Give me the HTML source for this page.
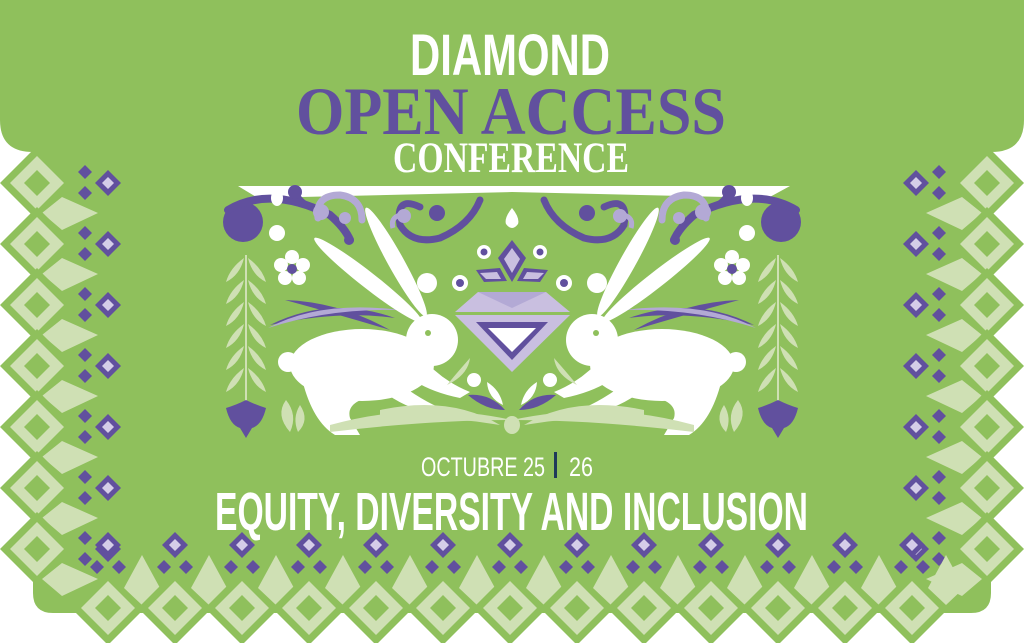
<!DOCTYPE html>
<html><head><meta charset="utf-8"><style>
html,body{margin:0;padding:0;background:#fff;width:1024px;height:643px;overflow:hidden}
svg{display:block}
</style></head><body>
<svg width="1024" height="643" viewBox="0 0 1024 643" xmlns="http://www.w3.org/2000/svg">
<defs>
<g id="lcol">
  <polygon points="37,-37 74,0 37,37 0,0" fill="#8fc05c"/>
  <polygon points="37,-27 64,0 37,27 10,0" fill="#cfe0b4"/>
  <polygon points="37,-13 50,0 37,13 24,0" fill="#8fc05c"/>
  <polygon points="42,30 62,14 98,30 62,47" fill="#cfe0b4"/>
  <polygon points="85,-18 92,-11 85,-4 78,-11" fill="#61509e"/>
  <polygon points="85,3 92,10 85,17 78,10" fill="#61509e"/>
  <polygon points="108,-13 121,0 108,13 95,0" fill="#61509e"/>
  <polygon points="108,-6 114,0 108,6 102,0" fill="#d5cde8"/>
</g>
<g id="bcol">
  <polygon points="0,-37 37,0 0,37 -37,0" fill="#8fc05c"/>
  <polygon points="0,-27 27,0 0,27 -27,0" fill="#cfe0b4"/>
  <polygon points="0,-13 13,0 0,13 -13,0" fill="#8fc05c"/>
  <polygon points="34,-53 52,-20 34,-3 16,-20" fill="#cfe0b4"/>
  <polygon points="0,-76 13,-63 0,-50 -13,-63" fill="#61509e"/>
  <polygon points="0,-69 6,-63 0,-57 -6,-63" fill="#d5cde8"/>
  <polygon points="-11,-48 -4,-41 -11,-34 -18,-41" fill="#61509e"/>
  <polygon points="11,-48 18,-41 11,-34 4,-41" fill="#61509e"/>
</g>
<g id="half">
  <circle cx="243" cy="222" r="20" fill="#61509e"/>
  <path d="M228 210 Q270 185 330 215 Q345 228 350 240" stroke="#61509e" stroke-width="8" fill="none" stroke-linecap="round"/>
  <circle cx="349" cy="240" r="5" fill="#61509e"/>
  <path d="M296 192 Q300 205 330 215" stroke="#61509e" stroke-width="5" fill="none"/>
  <circle cx="295" cy="192" r="7" fill="#61509e"/>
  <path d="M318 218 Q315 195 340 195 Q362 198 362 220" stroke="#b3a9d5" stroke-width="7" fill="none" stroke-linecap="round"/>
  <circle cx="321" cy="212" r="8" fill="#b3a9d5"/>
  <circle cx="345" cy="218" r="6" fill="#b3a9d5"/>
  <ellipse cx="277" cy="198" rx="6" ry="8" fill="#fff"/>
  <circle cx="277" cy="233" r="8" fill="#fff"/>
  <g fill="#fff">
    <circle cx="292" cy="257" r="7"/><circle cx="303" cy="265" r="7"/><circle cx="299" cy="278" r="7"/>
    <circle cx="285" cy="278" r="7"/><circle cx="281" cy="265" r="7"/>
  </g>
  <circle cx="292" cy="269" r="5" fill="#61509e"/>
  <g fill="#cfe0b4">
    <path d="M244 258 Q230 268 226 282 Q240 275 244 258Z"/><path d="M248 258 Q262 268 266 282 Q252 275 248 258Z"/>
    <path d="M244 280 Q230 290 226 304 Q240 297 244 280Z"/><path d="M248 280 Q262 290 266 304 Q252 297 248 280Z"/>
    <path d="M244 302 Q230 312 226 326 Q240 319 244 302Z"/><path d="M248 302 Q262 312 266 326 Q252 319 248 302Z"/>
    <path d="M244 324 Q230 334 226 348 Q240 341 244 324Z"/><path d="M248 324 Q262 334 266 348 Q252 341 248 324Z"/>
    <path d="M244 346 Q230 356 226 370 Q240 363 244 346Z"/><path d="M248 346 Q262 356 266 370 Q252 363 248 346Z"/>
    <path d="M244 368 Q230 378 226 392 Q240 385 244 368Z"/><path d="M248 368 Q262 378 266 392 Q252 385 248 368Z"/>
    <path d="M286 400 Q275 415 290 432 Q298 415 286 400Z"/><path d="M300 405 Q310 420 298 432 Q292 418 300 405Z"/>
  </g>
  <path d="M246 255 V410" stroke="#cfe0b4" stroke-width="2"/>
  <path d="M226 408 Q236 405 246 400 Q256 405 266 408 Q262 425 252 428 L246 438 L240 428 Q230 425 226 408Z" fill="#61509e"/>
  <path d="M270 325 Q330 295 395 318 Q340 310 270 325Z" fill="#61509e"/>
  <path d="M285 300 Q340 302 390 330 Q340 315 285 300Z" fill="#61509e"/>
  <path d="M268 328 Q320 300 400 310 Q330 308 268 328Z" fill="#b3a9d5"/>
  <g fill="#fff">
    <ellipse cx="368" cy="280" rx="68" ry="8" transform="rotate(38 368 280)"/>
    <ellipse cx="396" cy="262" rx="62" ry="8" transform="rotate(61 396 262)"/>
    <circle cx="432" cy="340" r="26"/>
    <ellipse cx="362" cy="365" rx="72" ry="36"/>
    <circle cx="288" cy="362" r="10"/>
    <path d="M300 370 Q310 420 335 435 L360 435 L350 418 Q345 400 380 395 Z"/>
    <path d="M420 355 Q440 380 470 392 L460 398 Q430 392 410 378 Z"/>
    <path d="M395 380 Q420 400 445 410 L438 415 Q410 410 388 395 Z"/>
  </g>
  <circle cx="428" cy="333" r="3" fill="#8fc05c"/>
  <path d="M330 425 Q420 400 512 420 Q430 420 330 432Z" fill="#cfe0b4"/>
  <path d="M380 410 Q450 395 500 425 Q440 415 380 418Z" fill="#cfe0b4"/>
  <path d="M470 358 Q455 375 447 385 Q468 375 470 358Z" fill="#cfe0b4"/>
  <path d="M420 207 Q395 195 400 225 Q412 245 440 238 Q470 225 480 200" stroke="#61509e" stroke-width="7" fill="none" stroke-linecap="round"/>
  <circle cx="437" cy="213" r="8" fill="#61509e"/>
  <circle cx="404" cy="216" r="7" fill="#b3a9d5"/>
  <path d="M393 228 Q390 218 400 215" stroke="#b3a9d5" stroke-width="5" fill="none"/>
  <circle cx="427" cy="283" r="10" fill="#fff"/>
  <circle cx="460" cy="283" r="8" fill="#fff"/><circle cx="460" cy="283" r="4" fill="#61509e"/>
  <circle cx="484" cy="252" r="7" fill="#fff"/><circle cx="484" cy="252" r="3.5" fill="#61509e"/>
  <polygon points="476,270 500,268 507,281 484,282" fill="#61509e"/>
  <polygon points="480,273 497,272 501,279 486,279" fill="#c9bfe0"/>
  <circle cx="474" cy="380" r="7" fill="#fff"/>
  <path d="M487 382 Q500 390 503 405 Q488 398 487 382Z" fill="#fff"/>
  <path d="M468 395 Q490 393 505 410 Q485 410 468 395Z" fill="#61509e"/>
</g>
</defs>

<rect x="0" y="0" width="1024" height="152" fill="#8fc05c"/>
<path d="M0 120 Q0 152 33 152 L0 152Z" fill="#fff"/>
<path d="M1024 120 Q1024 152 991 152 L1024 152Z" fill="#fff"/>
<path d="M33 140 H991 V593 Q991 613 971 613 H53 Q33 613 33 593Z" fill="#8fc05c"/>

<g>
  <use href="#lcol" y="183"/><use href="#lcol" y="244"/><use href="#lcol" y="305"/>
  <use href="#lcol" y="366"/><use href="#lcol" y="427"/><use href="#lcol" y="488"/><use href="#lcol" y="549"/>
</g>
<g transform="translate(1024,0) scale(-1,1)">
  <use href="#lcol" y="183"/><use href="#lcol" y="244"/><use href="#lcol" y="305"/>
  <use href="#lcol" y="366"/><use href="#lcol" y="427"/><use href="#lcol" y="488"/><use href="#lcol" y="549"/>
</g>
<g>
  <use href="#bcol" x="108" y="608"/><use href="#bcol" x="175" y="608"/><use href="#bcol" x="242" y="608"/>
  <use href="#bcol" x="309" y="608"/><use href="#bcol" x="376" y="608"/><use href="#bcol" x="443" y="608"/>
  <use href="#bcol" x="510" y="608"/><use href="#bcol" x="577" y="608"/><use href="#bcol" x="644" y="608"/>
  <use href="#bcol" x="711" y="608"/><use href="#bcol" x="778" y="608"/><use href="#bcol" x="845" y="608"/>
  <use href="#bcol" x="912" y="608"/>
</g>

<polygon points="238,186 790,186 768,198 512,192 258,198" fill="#fff"/>
<use href="#half"/>
<g transform="translate(1024,0) scale(-1,1)"><use href="#half"/></g>
<path d="M512 208 Q520 218 518 224 Q512 232 506 224 Q504 218 512 208Z" fill="#fff"/>
<polygon points="512,240 526,258 512,282 498,258" fill="#61509e"/>
<polygon points="512,248 520,259 512,273 504,259" fill="#c9bfe0"/>
<polygon points="455,312 478,292 546,292 570,312" fill="#c9bfe0"/>
<polygon points="478,292 546,292 512,308" fill="#b3a9d5"/>
<polygon points="455,315 570,315 512,372" fill="#c9bfe0"/>
<polygon points="476,322 548,322 512,360" fill="#61509e"/>
<polygon points="488,328 536,328 512,352" fill="#fff"/>
<ellipse cx="512" cy="425" rx="8" ry="9" fill="#cfe0b4"/>

<text x="410" y="75" textLength="200" lengthAdjust="spacingAndGlyphs" font-family="Liberation Sans Narrow, Liberation Sans, sans-serif" font-weight="bold" font-size="58" fill="#fff">DIAMOND</text>
<text x="296" y="134" textLength="430" lengthAdjust="spacingAndGlyphs" font-family="Liberation Serif, serif" font-weight="bold" font-size="68" fill="#61509e">OPEN ACCESS</text>
<text x="393" y="172" textLength="236" lengthAdjust="spacingAndGlyphs" font-family="Liberation Serif, serif" font-weight="bold" font-size="43" fill="#fff">CONFERENCE</text>
<text x="421" y="476" textLength="124" lengthAdjust="spacingAndGlyphs" font-family="Liberation Sans Narrow, Liberation Sans, sans-serif" font-size="27" fill="#fff">OCTUBRE 25</text>
<rect x="554" y="452" width="3" height="26" fill="#1f3a5a"/>
<text x="569" y="476" textLength="24" lengthAdjust="spacingAndGlyphs" font-family="Liberation Sans Narrow, Liberation Sans, sans-serif" font-size="27" fill="#fff">26</text>
<text x="215" y="530" textLength="593" lengthAdjust="spacingAndGlyphs" font-family="Liberation Sans Narrow, Liberation Sans, sans-serif" font-weight="bold" font-size="54" fill="#fff">EQUITY, DIVERSITY AND INCLUSION</text>
</svg>
</body></html>
